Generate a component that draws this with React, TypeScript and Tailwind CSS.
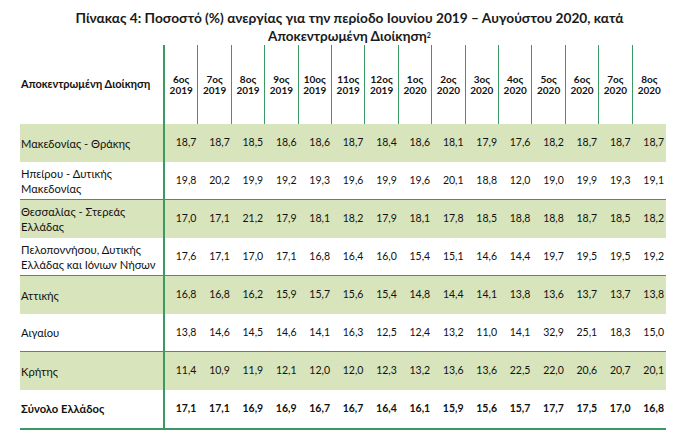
import React from 'react';

const months = [
  ['6ος', '2019'], ['7ος', '2019'], ['8ος', '2019'], ['9ος', '2019'], ['10ος', '2019'],
  ['11ος', '2019'], ['12ος', '2019'], ['1ος', '2020'], ['2ος', '2020'], ['3ος', '2020'],
  ['4ος', '2020'], ['5ος', '2020'], ['6ος', '2020'], ['7ος', '2020'], ['8ος', '2020'],
];

const rows: { label: string[]; values: string[] }[] = [
  { label: ['Μακεδονίας - Θράκης'], values: '18,7 18,7 18,5 18,6 18,6 18,7 18,4 18,6 18,1 17,9 17,6 18,2 18,7 18,7 18,7'.split(' ') },
  { label: ['Ηπείρου - Δυτικής', 'Μακεδονίας'], values: '19,8 20,2 19,9 19,2 19,3 19,6 19,9 19,6 20,1 18,8 12,0 19,0 19,9 19,3 19,1'.split(' ') },
  { label: ['Θεσσαλίας - Στερεάς', 'Ελλάδας'], values: '17,0 17,1 21,2 17,9 18,1 18,2 17,9 18,1 17,8 18,5 18,8 18,8 18,7 18,5 18,2'.split(' ') },
  { label: ['Πελοποννήσου, Δυτικής', 'Ελλάδας και Ιόνιων Νήσων'], values: '17,6 17,1 17,0 17,1 16,8 16,4 16,0 15,4 15,1 14,6 14,4 19,7 19,5 19,5 19,2'.split(' ') },
  { label: ['Αττικής'], values: '16,8 16,8 16,2 15,9 15,7 15,6 15,4 14,8 14,4 14,1 13,8 13,6 13,7 13,7 13,8'.split(' ') },
  { label: ['Αιγαίου'], values: '13,8 14,6 14,5 14,6 14,1 16,3 12,5 12,4 13,2 11,0 14,1 32,9 25,1 18,3 15,0'.split(' ') },
  { label: ['Κρήτης'], values: '11,4 10,9 11,9 12,1 12,0 12,0 12,3 13,2 13,6 13,6 22,5 22,0 20,6 20,7 20,1'.split(' ') },
];

const total = '17,1 17,1 16,9 16,9 16,7 16,7 16,4 16,1 15,9 15,6 15,7 17,7 17,5 17,0 16,8'.split(' ');

const gridCols = 'grid grid-cols-[145px_repeat(15,minmax(0,1fr))]';

const App: React.FC = () => {
  return (
    <div className="w-[681px] h-[447px] bg-white text-[#111] font-['Lato','Liberation_Sans',sans-serif]">
      <div className="pt-[9px] pl-[18px] text-center font-bold text-[13.7px] leading-[18px] text-[#1a1a1a]">
        <div>Πίνακας 4: Ποσοστό (%) ανεργίας για την περίοδο Ιουνίου 2019 – Αυγούστου 2020, κατά</div>
        <div className="text-[13.5px]">
          Αποκεντρωμένη Διοίκηση<sup className="text-[7px]">2</sup>
        </div>
      </div>

      <div className="ml-[20px] w-[646px]">
        {/* header */}
        <div className={`${gridCols} h-[79px]`}>
          <div className="flex items-center pl-[1px] border-r-2 border-[#3a9a64] text-[11px] font-bold">
            Αποκεντρωμένη Διοίκηση
          </div>
          {months.map(([m, y], i) => (
            <div
              key={i}
              className={`flex flex-col items-center justify-center text-[10px] font-bold leading-[11px] ${
                i < months.length - 1 ? 'border-r border-[#3a9a64]' : ''
              }`}
            >
              <span>{m}</span>
              <span>{y}</span>
            </div>
          ))}
        </div>

        {/* body */}
        {rows.map((row, r) => (
          <div
            key={r}
            className={`${gridCols} h-[38px] text-[10.5px] ${
              r % 2 === 0 ? 'bg-[#d8e4bc]' : 'bg-white border-b border-[#3a9a64]'
            }`}
          >
            <div className="flex flex-col justify-center pl-[1px] text-[11.2px] leading-[15px] border-r-2 border-[#3a9a64]">
              {row.label.map((l, k) => (
                <span key={k}>{l}</span>
              ))}
            </div>
            {row.values.map((v, k) => (
              <div key={k} className="flex items-center justify-end pr-[2px]">
                {v}
              </div>
            ))}
          </div>
        ))}

        <div className={`${gridCols} h-[40px] text-[10.5px] font-bold border-b-2 border-[#3a9a64]`}>
          <div className="flex items-center pl-[1px] text-[11.2px] border-r-2 border-[#3a9a64]">Σύνολο Ελλάδος</div>
          {total.map((v, k) => (
            <div key={k} className="flex items-center justify-end pr-[2px]">
              {v}
            </div>
          ))}
        </div>
      </div>
    </div>
  );
};

export default App;
